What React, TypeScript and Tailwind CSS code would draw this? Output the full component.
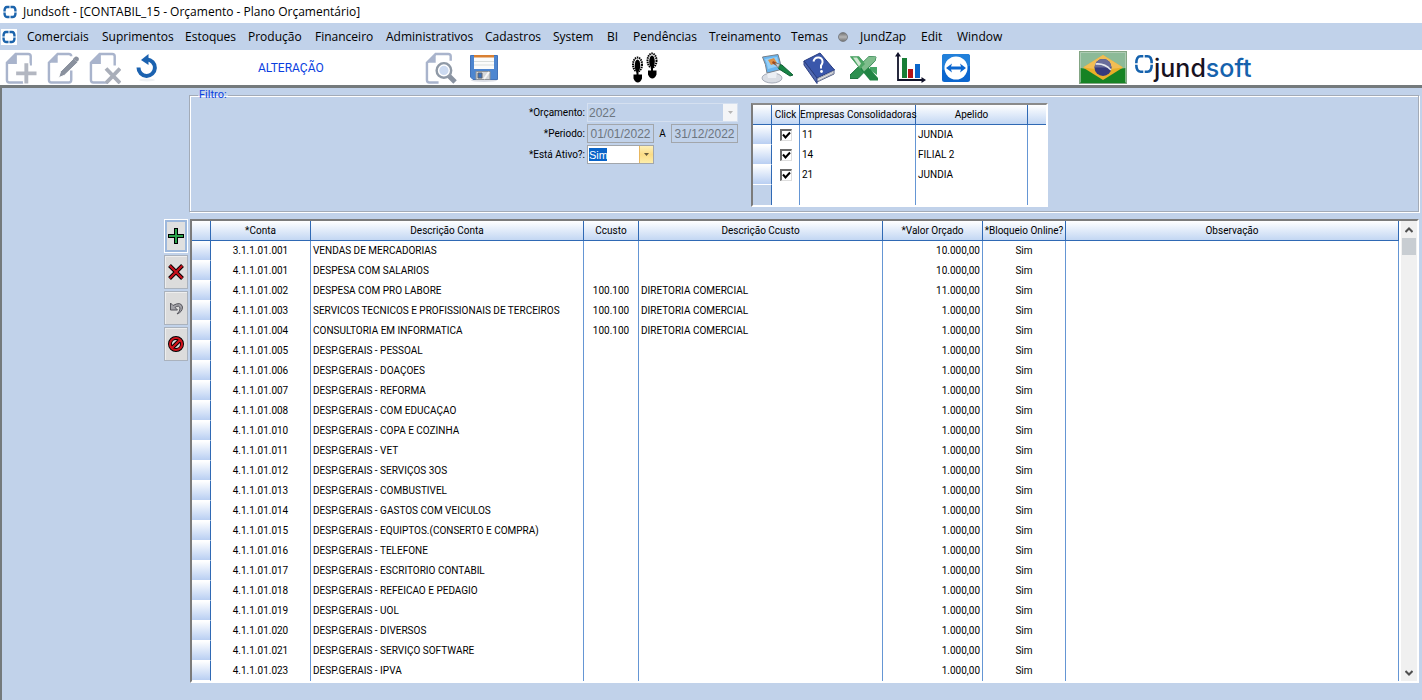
import type { ReactNode } from 'react';

type MenuEntry = { label: string; width: string };

const menuItems: MenuEntry[] = [
  { label: 'Comerciais', width: 'w-[75px]' },
  { label: 'Suprimentos', width: 'w-[83px]' },
  { label: 'Estoques', width: 'w-[63px]' },
  { label: 'Produção', width: 'w-[67px]' },
  { label: 'Financeiro', width: 'w-[71px]' },
  { label: 'Administrativos', width: 'w-[99px]' },
  { label: 'Cadastros', width: 'w-[68px]' },
  { label: 'System', width: 'w-[54px]' },
  { label: 'BI', width: 'w-[26px]' },
  { label: 'Pendências', width: 'w-[76px]' },
  { label: 'Treinamento', width: 'w-[82px]' },
  { label: 'Temas', width: 'w-[47px]' },
  { label: 'JundZap', width: 'w-[61px]' },
  { label: 'Edit', width: 'w-[36px]' },
  { label: 'Window', width: 'w-[60px]' },
];

const companies = [
  { code: '11', nickname: 'JUNDIA' },
  { code: '14', nickname: 'FILIAL 2' },
  { code: '21', nickname: 'JUNDIA' },
];

type Row = { conta: string; descricao: string; ccusto?: string; descCcusto?: string; valor: string };

const rows: Row[] = [
  { conta: '3.1.1.01.001', descricao: 'VENDAS DE MERCADORIAS', valor: '10.000,00' },
  { conta: '4.1.1.01.001', descricao: 'DESPESA COM SALARIOS', valor: '10.000,00' },
  { conta: '4.1.1.01.002', descricao: 'DESPESA COM PRO LABORE', ccusto: '100.100', descCcusto: 'DIRETORIA COMERCIAL', valor: '11.000,00' },
  { conta: '4.1.1.01.003', descricao: 'SERVICOS TECNICOS E PROFISSIONAIS DE TERCEIROS', ccusto: '100.100', descCcusto: 'DIRETORIA COMERCIAL', valor: '1.000,00' },
  { conta: '4.1.1.01.004', descricao: 'CONSULTORIA EM INFORMATICA', ccusto: '100.100', descCcusto: 'DIRETORIA COMERCIAL', valor: '1.000,00' },
  { conta: '4.1.1.01.005', descricao: 'DESP.GERAIS - PESSOAL', valor: '1.000,00' },
  { conta: '4.1.1.01.006', descricao: 'DESP.GERAIS - DOAÇOES', valor: '1.000,00' },
  { conta: '4.1.1.01.007', descricao: 'DESP.GERAIS - REFORMA', valor: '1.000,00' },
  { conta: '4.1.1.01.008', descricao: 'DESP.GERAIS - COM EDUCAÇAO', valor: '1.000,00' },
  { conta: '4.1.1.01.010', descricao: 'DESP.GERAIS - COPA E COZINHA', valor: '1.000,00' },
  { conta: '4.1.1.01.011', descricao: 'DESP.GERAIS - VET', valor: '1.000,00' },
  { conta: '4.1.1.01.012', descricao: 'DESP.GERAIS - SERVIÇOS 3OS', valor: '1.000,00' },
  { conta: '4.1.1.01.013', descricao: 'DESP.GERAIS - COMBUSTIVEL', valor: '1.000,00' },
  { conta: '4.1.1.01.014', descricao: 'DESP.GERAIS - GASTOS COM VEICULOS', valor: '1.000,00' },
  { conta: '4.1.1.01.015', descricao: 'DESP.GERAIS - EQUIPTOS.(CONSERTO E COMPRA)', valor: '1.000,00' },
  { conta: '4.1.1.01.016', descricao: 'DESP.GERAIS - TELEFONE', valor: '1.000,00' },
  { conta: '4.1.1.01.017', descricao: 'DESP.GERAIS - ESCRITORIO CONTABIL', valor: '1.000,00' },
  { conta: '4.1.1.01.018', descricao: 'DESP.GERAIS - REFEICAO E PEDAGIO', valor: '1.000,00' },
  { conta: '4.1.1.01.019', descricao: 'DESP.GERAIS - UOL', valor: '1.000,00' },
  { conta: '4.1.1.01.020', descricao: 'DESP.GERAIS - DIVERSOS', valor: '1.000,00' },
  { conta: '4.1.1.01.021', descricao: 'DESP.GERAIS - SERVIÇO SOFTWARE', valor: '1.000,00' },
  { conta: '4.1.1.01.023', descricao: 'DESP.GERAIS - IPVA', valor: '1.000,00' },
];

function AppMark({ className }: { className: string }) {
  return (
    <svg className={className} viewBox="0 0 16 16" fill="none" stroke="#1c64ac" strokeWidth="2.4" aria-hidden="true">
      <path d="M7.500 3H5Q2.500 3 2.500 7.500M8.500 3H11q2.500 0 2.500 4.500M7.500 13H5q-2.500 0-2.500-4.500M8.500 13H11q2.500 0 2.500-4.500" />
    </svg>
  );
}

function PageOutline() {
  return (
    <path
      d="M19 31.500H4.500a2.500 2.500 0 0 1-2.500-2.500V11L11 2h13a2.500 2.500 0 0 1 2.500 2.500V14M2 11h9V2"
      fill="none"
      stroke="#a9b4cc"
      strokeWidth="2.500"
    />
  );
}

function NewIcon() {
  return (
    <svg className="h-8 w-8" viewBox="0 0 33 33">
      <PageOutline />
      <path d="M2 11 11 2v9z" fill="#a9b4cc" />
      <path d="M22 11.500v21M11.500 22h21" stroke="#fff" strokeWidth="7" />
      <path d="M22 11.500v21M11.500 22h21" stroke="#b3b7c1" strokeWidth="4" />
    </svg>
  );
}

function EditIcon() {
  return (
    <svg className="h-8 w-8" viewBox="0 0 33 33">
      <path d="M25 19v10a2.500 2.500 0 0 1-2.500 2.500h-18A2.500 2.500 0 0 1 2 29V11L11 2h11.500a2.500 2.500 0 0 1 2.500 2.500" fill="none" stroke="#a9b4cc" strokeWidth="2.500" />
      <path d="M2 11 11 2v9z" fill="#a9b4cc" />
      <path d="M12 26.500 14 20 27.500 6.500l4.500 4L18 24z" fill="#8a919e" stroke="#fff" strokeWidth="1" />
      <path d="m27 7 2-2q1.500-1 3 .500t.500 3l-1.500 1.500z" fill="#8a919e" />
    </svg>
  );
}

function DeleteIcon() {
  return (
    <svg className="h-8 w-8" viewBox="0 0 33 33">
      <PageOutline />
      <path d="M2 11 11 2v9z" fill="#a9b4cc" />
      <path d="m18 17 14 15m0-15L18 32" stroke="#fff" strokeWidth="7" />
      <path d="m17.500 17 14.500 15m0-15L17.500 32" stroke="#a9aeb9" strokeWidth="4" />
    </svg>
  );
}

function RefreshIcon() {
  return (
    <svg className="h-7 w-[22px]" viewBox="0 0 22 28">
      <ellipse cx="11" cy="26" rx="8" ry="1.500" fill="#eef1f4" />
      <path d="M2.500 13.500A8.200 8.200 0 1 0 11 5.500" fill="none" stroke="#1b62b0" strokeWidth="4" />
      <path d="M12.500 0v11L5 6z" fill="#1b62b0" />
    </svg>
  );
}

function SearchIcon() {
  return (
    <svg className="h-8 w-8" viewBox="0 0 33 33">
      <path d="M14 31.500H4.500a2.500 2.500 0 0 1-2.500-2.500V11L11 2h13a2.500 2.500 0 0 1 2.500 2.500V9" fill="none" stroke="#a9b4cc" strokeWidth="2.500" />
      <path d="M2 11 11 2v9z" fill="#a9b4cc" />
      <path d="m24 24 7 7" stroke="#8a93a1" strokeWidth="5" />
      <circle cx="19.500" cy="19" r="7.500" fill="#fff" stroke="#8f99a6" strokeWidth="2.500" />
      <circle cx="19.500" cy="19" r="4.800" fill="#ccdaf0" />
    </svg>
  );
}

function SaveIcon() {
  return (
    <svg className="h-7 w-7" viewBox="0 0 28 28">
      <ellipse cx="14" cy="26.500" rx="13" ry="1.500" fill="#dcdfe6" />
      <path d="M.5 1.500h27v24H3L.500 23z" fill="#4d86d0" stroke="#4272b8" />
      <path d="M4 1h20v14H4z" fill="#fbfcfb" />
      <path d="M4 1h20v2.500H4z" fill="#d98032" />
      <path d="M4 7.500h20M4 11h20" stroke="#d9dedb" />
      <path d="M6 17.500h14v8H6z" fill="#d5d7d9" stroke="#8d9298" />
      <path d="M8 19h4v5H8z" fill="#3770be" stroke="#60656c" />
      <path d="m14 25 5-7" stroke="#f7f7f7" strokeWidth="2" />
    </svg>
  );
}

function Footprint({ x, y }: { x: number; y: number }) {
  return (
    <g transform={`translate(${x} ${y})`}>
      <ellipse cx="5.500" cy="7.500" rx="4.500" ry="7" fill="#fff" stroke="#000" strokeWidth="2" strokeDasharray="1.500 .7" />
      <ellipse cx="5.500" cy="8.500" rx="2.800" ry="6" />
      <path d="M4.500 13h2v5h-2zM1.500 17.500h8.500v4q-1.500 4-4.200 4t-4.300-4z" />
    </g>
  );
}

function StepsIcon() {
  return (
    <svg className="h-8 w-[26px]" viewBox="0 0 26 32">
      <Footprint x={0} y={5} />
      <Footprint x={14.500} y={1} />
    </svg>
  );
}

function PaintIcon() {
  return (
    <svg className="h-8 w-8" viewBox="0 0 32 32">
      <ellipse cx="11" cy="26" rx="10" ry="5" fill="#d9dde4" stroke="#a6acb8" />
      <path d="m5 17 11 3-1 6H7z" fill="#eceff4" />
      <path d="M1.500 5 17 2.500q3 9 3 15L6 21Q5 12 1.500 5z" fill="#69b5ee" stroke="#777f89" />
      <path d="M4 7 16 5q1.500 5 2 9L7 17q-1-6-3-10z" fill="#95d0f8" />
      <path d="m7 8 6-2 3 5-6 2z" fill="#dc8f45" />
      <path d="m12 9 6 3-1 3-6-4z" fill="#9b4a20" />
      <path d="m16 12 5 1 11 10-3 1-11-7z" fill="#178443" stroke="#0f5f35" />
      <path d="m14 11 5 1-2 4z" fill="#c8cdd0" stroke="#70777b" strokeWidth=".6" />
    </svg>
  );
}

function HelpBookIcon() {
  return (
    <svg className="h-8 w-8" viewBox="0 0 32 32">
      <path d="m1 9 13 21 17-8v-5L14 24z" fill="#e2e3e7" stroke="#4c5a86" />
      <path d="M1 9 17 1l14.500 17L14 26z" fill="#3a57ab" stroke="#263b80" />
      <path d="m1 9 13 17v5.500L1 13z" fill="#5169b0" stroke="#2b3e80" />
      <path d="m15 29 16-8m-16 5.500L31 19" stroke="#a2a6af" />
      <path d="M10.500 9.500q1-4.500 5.500-4 4 1 3.500 5-.5 2-1.500 3v3" fill="none" stroke="#fff" strokeWidth="2" />
      <circle cx="18.500" cy="19.500" r="1.400" fill="#fff" />
    </svg>
  );
}

function ExcelIcon() {
  return (
    <svg className="h-7 w-7" viewBox="0 0 28 28">
      <path d="m26 3-7-.5L0 21v3.500h8L25 7z" fill="#2d9150" stroke="#207742" />
      <path d="M20 13h7v8l-7-5z" fill="#46a466" />
      <path d="M0 2.500h9L28 24v2.500h-8z" fill="#218444" />
      <path d="m26 3-7-.5-9 9 4 6L25 7z" fill="#7fbd8d" />
      <path d="M0 2.500h9L15 10l-5 5z" fill="#4da565" />
      <path d="M3 3.500h4l4 6-2 3z" fill="#d0e7d2" />
    </svg>
  );
}

function ChartIcon() {
  return (
    <svg className="h-8 w-8" viewBox="0 0 32 32">
      <path d="M8 6h5v20H8z" fill="#187e36" />
      <path d="M14 17h5v9h-5z" fill="#b41318" />
      <path d="M21 12h5v14h-5z" fill="#0a66cb" />
      <path d="M4 3v25h25" fill="none" stroke="#11132a" strokeWidth="1.800" />
      <path d="m1 4.500 3-4.500 3 4.500zM27.500 25 32 28l-4.500 3z" fill="#11132a" />
    </svg>
  );
}

function RemoteIcon() {
  return (
    <svg className="h-7 w-7" viewBox="0 0 28 28">
      <rect width="28" height="28" rx="2.500" fill="#0b66cf" />
      <path d="M2.500 0h23A2.500 2.500 0 0 1 28 2.500V12L0 16V2.500A2.500 2.500 0 0 1 2.500 0z" fill="#2280da" />
      <circle cx="14" cy="14" r="11.500" fill="#fff" />
      <path d="m4 14 6-4.500-1 3h10l-1-3 6 4.500-6 4.500 1-3H9l1 3z" fill="#0b66cf" />
    </svg>
  );
}

function BrazilFlag() {
  return (
    <svg className="h-[33px] w-12 shrink-0" viewBox="0 0 48 33">
      <rect x=".5" y=".5" width="47" height="32" fill="#168324" stroke="#83a584" />
      <path d="M1 1h46v16q-24 4-46 0z" fill="#8cba98" />
      <path d="m24 4 20 12.500L24 29 4 16.500z" fill="#e9ae28" />
      <path d="m24 4 20 12.500q-20 3-40 0z" fill="#f2bd54" />
      <circle cx="24" cy="16.500" r="8.500" fill="#363a7c" />
      <path d="M15.500 16.500a8.500 8.500 0 0 1 17 0z" fill="#696c9a" />
      <path d="M16.500 13q9-1 15.500 6" fill="none" stroke="#e6e8ee" strokeWidth="1.500" />
      <path d="M1.500 31.500v-30h45v30" fill="none" stroke="#c4d8c6" strokeOpacity=".6" />
    </svg>
  );
}

function ToolButton({ label, children }: { label: string; children: ReactNode }) {
  return (
    <button type="button" aria-label={label} className="flex shrink-0 items-center justify-center">
      {children}
    </button>
  );
}

function Toolbar() {
  return (
    <div className="flex h-[35px] items-center overflow-hidden bg-white pl-[5px]">
      <div className="flex w-[253px] shrink-0 items-center gap-[10px]">
        <ToolButton label="Novo"><NewIcon /></ToolButton>
        <ToolButton label="Alterar"><EditIcon /></ToolButton>
        <ToolButton label="Excluir"><DeleteIcon /></ToolButton>
        <span className="pl-[5px]">
          <ToolButton label="Atualizar"><RefreshIcon /></ToolButton>
        </span>
      </div>
      <span className="w-[167px] shrink-0 text-[12px] leading-4 text-[#0a3ee0]">ALTERAÇÃO</span>
      <div className="flex w-[207px] shrink-0 items-center gap-[13px]">
        <ToolButton label="Pesquisar"><SearchIcon /></ToolButton>
        <ToolButton label="Salvar"><SaveIcon /></ToolButton>
      </div>
      <div className="w-[129px] shrink-0">
        <ToolButton label="Acompanhar"><StepsIcon /></ToolButton>
      </div>
      <div className="flex w-[318px] shrink-0 items-center">
        <div className="flex items-center gap-[10px]">
          <ToolButton label="Aparência"><PaintIcon /></ToolButton>
          <ToolButton label="Ajuda"><HelpBookIcon /></ToolButton>
        </div>
        <div className="flex items-center gap-4 pl-[15px]">
          <ToolButton label="Excel"><ExcelIcon /></ToolButton>
          <ToolButton label="Gráficos"><ChartIcon /></ToolButton>
          <ToolButton label="Acesso remoto"><RemoteIcon /></ToolButton>
        </div>
      </div>
      <BrazilFlag />
      <div className="flex shrink-0 items-center pl-[7px] text-[#18121f]">
        <svg className="mb-2 h-5 w-5" viewBox="0 0 20 20" fill="none" stroke="#1562ad" strokeWidth="2.600" aria-hidden="true">
          <path d="M9.300 2.300H6.500q-4.200 0-4.200 7M10.700 2.300h2.800q4.200 0 4.200 7M9.300 17.700H6.500q-4.200 0-4.200-7M10.700 17.700h2.800q4.200 0 4.200-7" />
        </svg>
        <span className="font-[Inter,sans-serif] text-[25px] leading-8 font-medium">
          jund<span className="text-[#1562ad]">soft</span>
        </span>
      </div>
    </div>
  );
}

function ComboArrow({ className }: { className: string }) {
  return (
    <span className={`pointer-events-none absolute top-px right-px bottom-px flex w-[14px] items-center justify-center ${className}`}>
      <svg className="h-[3px] w-[5px]" viewBox="0 0 5 3" aria-hidden="true">
        <path d="M0 0h5L2.500 3z" fill="currentColor" />
      </svg>
    </span>
  );
}

function CompaniesTable() {
  const head = 'h-5 border-r border-b border-r-[#2f69b4] border-b-[#2f69b4] bg-linear-to-b from-white to-[#c3d7f3] p-0 text-center font-normal';
  return (
    <div className="h-[104px] w-[297px] shrink-0 border-2 border-t-[#8a8a8a] border-r-white border-b-white border-l-[#7b7b7b] bg-white">
      <table className="h-full w-full table-fixed border-separate border-spacing-0">
        <colgroup>
          <col className="w-[19px]" />
          <col className="w-[28px]" />
          <col className="w-[116px]" />
          <col className="w-[112px]" />
          <col />
        </colgroup>
        <thead>
          <tr>
            <th className={head}></th>
            <th className={head}>Click</th>
            <th className={head}>Empresas Consolidadoras</th>
            <th className={head}>Apelido</th>
            <th className="h-5 border-b border-[#2f69b4] bg-linear-to-b from-white to-[#c3d7f3] p-0"></th>
          </tr>
        </thead>
        <tbody>
          {companies.map((company) => (
            <tr key={company.code}>
              <td className="h-5 border-r border-b border-r-[#2f69b4] border-b-white bg-linear-to-b from-white to-[#b9cff2] p-0"></td>
              <td className="border-r border-[#6596d4] p-0">
                <label className="grid justify-center">
                  <input
                    type="checkbox"
                    defaultChecked
                    aria-label={`Empresa ${company.code}`}
                    className="peer col-start-1 row-start-1 h-3 w-3 appearance-none border-t-2 border-r border-b border-l-2 border-t-[#6b6b6b] border-r-[#dedede] border-b-[#dedede] border-l-[#6b6b6b] bg-white"
                  />
                  <svg className="pointer-events-none invisible col-start-1 row-start-1 h-3 w-3 peer-checked:visible" viewBox="0 0 12 12" aria-hidden="true">
                    <path d="m3 5.500 2.500 3L10 3.500" fill="none" stroke="#000" strokeWidth="2" />
                  </svg>
                </label>
              </td>
              <td className="border-r border-[#6596d4] p-0 pl-[2px]">{company.code}</td>
              <td className="border-r border-[#6596d4] p-0 pl-[2px]">{company.nickname}</td>
              <td className="p-0"></td>
            </tr>
          ))}
          <tr>
            <td className="border-r border-[#2f69b4] bg-[#c1d2ea] p-0"></td>
            <td className="border-r border-[#6596d4] p-0"></td>
            <td className="border-r border-[#6596d4] p-0"></td>
            <td className="border-r border-[#6596d4] p-0"></td>
            <td className="p-0"></td>
          </tr>
        </tbody>
      </table>
    </div>
  );
}

function Filter() {
  const dateInput = "h-[19px] w-[67px] border border-[#a2a6ab] text-center font-['Liberation_Sans',Arial,sans-serif] text-[12px] leading-4 text-[#6d7680]";
  return (
    <fieldset className="h-[123px] border border-[#a3abb7] px-2 shadow-[1px_1px_0_#fff,inset_1px_1px_0_#fff]">
      <legend className="h-3 px-px text-[11px] leading-3 text-[#0a3ee0]">Filtro:</legend>
      <div className="flex items-start pt-[2px] pl-[311px]">
        <div className="grid w-[242px] shrink-0 grid-cols-[76px_151px] items-center gap-x-[2px] gap-y-[2px]">
          <label htmlFor="orcamento" className="text-right">*Orçamento:</label>
          <div className="relative">
            <select
              id="orcamento"
              disabled
              defaultValue="2022"
              className="block h-[19px] w-full appearance-none border border-[#d5e0f0] px-px font-['Liberation_Sans',Arial,sans-serif] text-[12px] leading-4 text-[#6d7680] opacity-100"
            >
              <option>2022</option>
            </select>
            <ComboArrow className="bg-[#f4f5f7] text-[#b5b5b5]" />
          </div>
          <label htmlFor="inicio" className="text-right">*Periodo:</label>
          <div className="flex items-center">
            <input id="inicio" disabled defaultValue="01/01/2022" className={dateInput} />
            <label htmlFor="fim" className="flex-1 text-center">A</label>
            <input id="fim" disabled defaultValue="31/12/2022" className={dateInput} />
          </div>
          <label htmlFor="ativo" className="text-right">*Está Ativo?:</label>
          <div className="relative w-[67px]">
            <select
              id="ativo"
              defaultValue="Sim"
              className="block h-[19px] w-full appearance-none border border-[#a2a6ab] bg-white bg-[linear-gradient(#0a64c8,#0a64c8)] bg-size-[18px_13px] bg-position-[1px_2px] bg-no-repeat px-px font-['Liberation_Sans',Arial,sans-serif] text-[11px] leading-4 text-white"
            >
              <option>Sim</option>
              <option>Não</option>
            </select>
            <ComboArrow className="border-l border-[#e8b75e] bg-linear-to-b from-[#fdf0b8] via-[#fbdc86] to-[#fdeeaa] text-[#665a3c]" />
          </div>
        </div>
        <CompaniesTable />
      </div>
    </fieldset>
  );
}

function SideButton({ label, focused, children }: { label: string; focused?: boolean; children: ReactNode }) {
  return (
    <button
      type="button"
      aria-label={label}
      className={
        focused
          ? 'flex h-[34px] w-6 items-center justify-center border border-white bg-[#e0e0e0] shadow-[inset_0_0_0_2px_#9db8dc]'
          : 'flex h-[34px] w-6 items-center justify-center border border-[#aab2bd] bg-[#dcdcdc] shadow-[inset_1px_1px_0_#eee]'
      }
    >
      {children}
    </button>
  );
}

function SideButtons() {
  return (
    <div className="flex w-6 shrink-0 flex-col gap-[2px]">
      <SideButton label="Incluir linha" focused>
        <svg className="h-4 w-4" viewBox="0 0 16 16">
          <path d="M6 0h4v6h6v4h-6v6H6v-6H0V6h6z" fill="#000" />
          <path d="M7 1h2v6h6v2H9v6H7V9H1V7h6z" fill="#2aa24b" />
        </svg>
      </SideButton>
      <SideButton label="Excluir linha">
        <svg className="h-4 w-4" viewBox="0 0 16 16">
          <path d="m1.500 1.500 13 13m0-13-13 13" stroke="#000" strokeWidth="4" />
          <path d="m1.800 1.800 12.400 12.400m0-12.400L1.800 14.200" stroke="#c8101c" strokeWidth="2.200" />
        </svg>
      </SideButton>
      <SideButton label="Desfazer">
        <svg className="h-4 w-4" viewBox="0 0 16 16">
          <path d="M2.500 3v7h7L7 7.500Q11 4.500 12 8q.5 3-3 6 5.500-2 5.500-7Q13 1 5 5.500z" fill="#a3a3a9" stroke="#55555c" />
        </svg>
      </SideButton>
      <SideButton label="Cancelar">
        <svg className="h-4 w-4" viewBox="0 0 16 16" fill="none">
          <path d="M8 2a6 6 0 1 0 0 12A6 6 0 0 0 8 2zM4 12l8-8" stroke="#000" strokeWidth="4" />
          <path d="M8 2a6 6 0 1 0 0 12A6 6 0 0 0 8 2zM4 12l8-8" stroke="#d0121b" strokeWidth="2.200" />
        </svg>
      </SideButton>
    </div>
  );
}

function BudgetTable() {
  const head = 'h-5 border-r border-b border-[#2f69b4] bg-linear-to-b from-white to-[#c3d7f3] p-0 text-center font-normal';
  const cell = 'h-5 border-r border-[#6596d4] p-0';
  return (
    <div className="flex min-w-0 flex-1 border-2 border-t-[#7b7b7b] border-r-white border-b-white border-l-[#7b7b7b] bg-white">
      <table className="w-full min-w-0 flex-1 table-fixed border-separate border-spacing-0">
        <colgroup>
          <col className="w-[19px]" />
          <col className="w-[100px]" />
          <col className="w-[273px]" />
          <col className="w-[55px]" />
          <col className="w-[244px]" />
          <col className="w-[100px]" />
          <col className="w-[83px]" />
          <col />
        </colgroup>
        <thead>
          <tr>
            <th className={head}></th>
            <th className={head}>*Conta</th>
            <th className={head}>Descrição Conta</th>
            <th className={head}>Ccusto</th>
            <th className={head}>Descrição Ccusto</th>
            <th className={head}>*Valor Orçado</th>
            <th className={head}>*Bloqueio Online?</th>
            <th className={head}>Observação</th>
          </tr>
        </thead>
        <tbody>
          {rows.map((row) => (
            <tr key={row.conta}>
              <td className="h-5 border-r border-b border-r-[#2f69b4] border-b-white bg-linear-to-b from-white to-[#b9cff2] p-0"></td>
              <td className={`${cell} text-center`}>{row.conta}</td>
              <td className={`${cell} pl-[2px]`}>{row.descricao}</td>
              <td className={`${cell} text-center`}>{row.ccusto}</td>
              <td className={`${cell} pl-[2px]`}>{row.descCcusto}</td>
              <td className={`${cell} pr-[2px] text-right`}>{row.valor}</td>
              <td className={`${cell} text-center`}>Sim</td>
              <td className={cell}></td>
            </tr>
          ))}
        </tbody>
      </table>
      <div className="ml-[2px] flex w-4 shrink-0 flex-col bg-[#f0f0f0] text-[#505050]">
        <button type="button" aria-label="Rolar para cima" className="flex h-[17px] items-center justify-center">
          <svg className="h-2 w-2" viewBox="0 0 8 8" fill="none" stroke="currentColor" strokeWidth="2"><path d="m.5 6 3.500-3.500L7.500 6" /></svg>
        </button>
        <div className="mx-px h-[17px] bg-[#c8cdd2]"></div>
        <div className="flex-1"></div>
        <button type="button" aria-label="Rolar para baixo" className="flex h-[17px] items-center justify-center">
          <svg className="h-2 w-2" viewBox="0 0 8 8" fill="none" stroke="currentColor" strokeWidth="2"><path d="m.5 2 3.500 3.500L7.500 2" /></svg>
        </button>
      </div>
    </div>
  );
}

export default function App() {
  return (
    <div className="flex min-h-screen flex-col bg-[#c1d2ea] font-[Roboto,'Liberation_Sans',Arial,sans-serif] text-[10px] leading-4 whitespace-nowrap text-black">
      <header className="flex h-[23px] items-center gap-[5px] bg-white pl-[2px] font-['Open_Sans','Noto_Sans',sans-serif] text-[12px]">
        <AppMark className="h-4 w-4" />
        <h1>Jundsoft - [CONTABIL_15 - Orçamento - Plano Orçamentário]</h1>
      </header>

      <nav className="flex h-[27px] items-center pl-px font-['Open_Sans','Noto_Sans',sans-serif] text-[12px]">
        <span className="mr-[10px] bg-white">
          <AppMark className="h-4 w-4" />
        </span>
        {menuItems.map((item) => (
          <div key={item.label} className="flex shrink-0 items-center">
            {item.label === 'JundZap' && (
              <span className="mr-3 h-[10px] w-[10px] rounded-full border border-[#7b7f86] bg-linear-to-b from-[#777] via-[#b5b5b5] to-[#777]"></span>
            )}
            <button type="button" className={`text-left ${item.width}`}>{item.label}</button>
          </div>
        ))}
      </nav>

      <Toolbar />

      <main className="flex flex-1 flex-col gap-[7px] border-t-3 border-l-2 border-[#747a7c] pt-[1px] pr-[3px] pb-4">
        <div className="pl-[187px]">
          <Filter />
        </div>
        <div className="flex items-start gap-[2px] pl-[162px]">
          <SideButtons />
          <BudgetTable />
        </div>
      </main>
    </div>
  );
}
